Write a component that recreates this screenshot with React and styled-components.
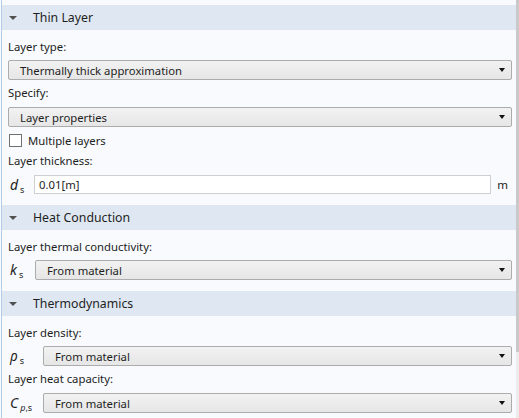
import React from "react";
import styled, { createGlobalStyle } from "styled-components";

const Global = createGlobalStyle`
  html, body { margin: 0; padding: 0; background: #f8fafd; }
  body { font-family: "Segoe UI", "Noto Sans", sans-serif; color: #1e1e1e; }
`;

const Frame = styled.div`
  width: 519px;
  height: 418px;
  display: flex;
  box-sizing: border-box;
  overflow: hidden;
  background: #f8fafd;
`;

const LeftEdge = styled.div`
  width: 1px;
  margin-left: 1px;
  background: #b3cde8;
`;

const Content = styled.div`
  flex: 1;
  padding-top: 5px;
  min-width: 0;
`;

const Scrollbar = styled.div`
  width: 3px;
  display: flex;
  flex-direction: column;
`;

const Thumb = styled.div`
  height: 352px;
  background: #c9c9c9;
`;

const Track = styled.div`
  flex: 1;
  background: #ececec;
`;

const Header = styled.div`
  height: 25px;
  background: #dfe8f2;
  display: flex;
  align-items: center;
  font-size: 12.3px;
  color: #1e1e1e;
`;

const Caret = styled.span`
  width: 0;
  height: 0;
  border-left: 4px solid transparent;
  border-right: 4px solid transparent;
  border-top: 4px solid #505050;
  margin-left: 7px;
  margin-right: 16px;
`;

const Body = styled.div`
  padding: 8px 4px 11px 6px;
  display: flex;
  flex-direction: column;
`;

const Label = styled.div`
  flex: none;
  font-size: 11.3px;
  line-height: 16px;
  height: 16px;
  margin-top: ${(p) => (p.$first ? 1 : 5)}px;
  margin-bottom: ${(p) => (p.$first ? 5 : 6)}px;
`;

const Row = styled.div`
  display: flex;
  align-items: center;
`;

const Symbol = styled.div`
  width: ${(p) => p.$w}px;
  flex: none;
  font-family: "Segoe UI", "Noto Sans", sans-serif;
  font-style: italic;
  font-size: 14px;
  line-height: 18px;
  padding-left: 2px;
  box-sizing: border-box;
  sub {
    font-style: normal;
    font-size: 9px;
    vertical-align: -3px;
    margin-left: 2px;
    line-height: 0;
  }
  i { font-style: italic; }
`;

const Select = styled.div`
  flex: 1 1 auto;
  min-width: 0;
  height: 20px;
  box-sizing: border-box;
  border: 1px solid #acacac;
  border-radius: 2px;
  background: linear-gradient(#f2f2f2, #e6e6e6);
  display: flex;
  align-items: center;
  padding-left: 11px;
  padding-right: 6px;
  font-size: 11.3px;
`;

const SelectText = styled.span`
  flex: 1;
`;

const Arrow = styled.span`
  width: 0;
  height: 0;
  border-left: 3.5px solid transparent;
  border-right: 3.5px solid transparent;
  border-top: 4px solid #111;
`;

const Input = styled.div`
  flex: 1 1 auto;
  min-width: 0;
  height: 19px;
  box-sizing: border-box;
  border: 1px solid #cfcfcf;
  background: #fff;
  display: flex;
  align-items: center;
  padding-left: 4px;
  font-size: 11.3px;
`;

const Unit = styled.div`
  width: 21px;
  flex: none;
  text-align: right;
  padding-right: 4px;
  box-sizing: border-box;
  font-size: 11.5px;
`;

const CheckRow = styled.div`
  display: flex;
  align-items: center;
  flex: none;
  height: 16px;
  margin-top: 5px;
  font-size: 11.3px;
`;

const Box = styled.span`
  width: 13px;
  height: 13px;
  box-sizing: border-box;
  border: 1px solid #707070;
  background: #fff;
  margin-right: 6px;
  margin-left: 1px;
`;

const Dropdown = ({ children }) => (
  <Select>
    <SelectText>{children}</SelectText>
    <Arrow />
  </Select>
);

export default function App() {
  return (
    <>
      <Global />
      <Frame>
        <LeftEdge />
        <Content>
          <Header>
            <Caret />
            Thin Layer
          </Header>
          <Body>
            <Label $first>Layer type:</Label>
            <Dropdown>Thermally thick approximation</Dropdown>
            <Label>Specify:</Label>
            <Dropdown>Layer properties</Dropdown>
            <CheckRow>
              <Box />
              Multiple layers
            </CheckRow>
            <Label>Layer thickness:</Label>
            <Row>
              <Symbol $w={26}>
                d<sub>s</sub>
              </Symbol>
              <Input>0.01[m]</Input>
              <Unit>m</Unit>
            </Row>
          </Body>
          <Header>
            <Caret />
            Heat Conduction
          </Header>
          <Body>
            <Label $first>Layer thermal conductivity:</Label>
            <Row>
              <Symbol $w={27}>
                k<sub>s</sub>
              </Symbol>
              <Dropdown>From material</Dropdown>
            </Row>
          </Body>
          <Header>
            <Caret />
            Thermodynamics
          </Header>
          <Body>
            <Label $first>Layer density:</Label>
            <Row>
              <Symbol $w={35}>
                ρ<sub>s</sub>
              </Symbol>
              <Dropdown>From material</Dropdown>
            </Row>
            <Label>Layer heat capacity:</Label>
            <Row>
              <Symbol $w={35}>
                C<sub><i>p</i>,s</sub>
              </Symbol>
              <Dropdown>From material</Dropdown>
            </Row>
          </Body>
        </Content>
        <Scrollbar>
          <Thumb />
          <Track />
        </Scrollbar>
      </Frame>
    </>
  );
}
